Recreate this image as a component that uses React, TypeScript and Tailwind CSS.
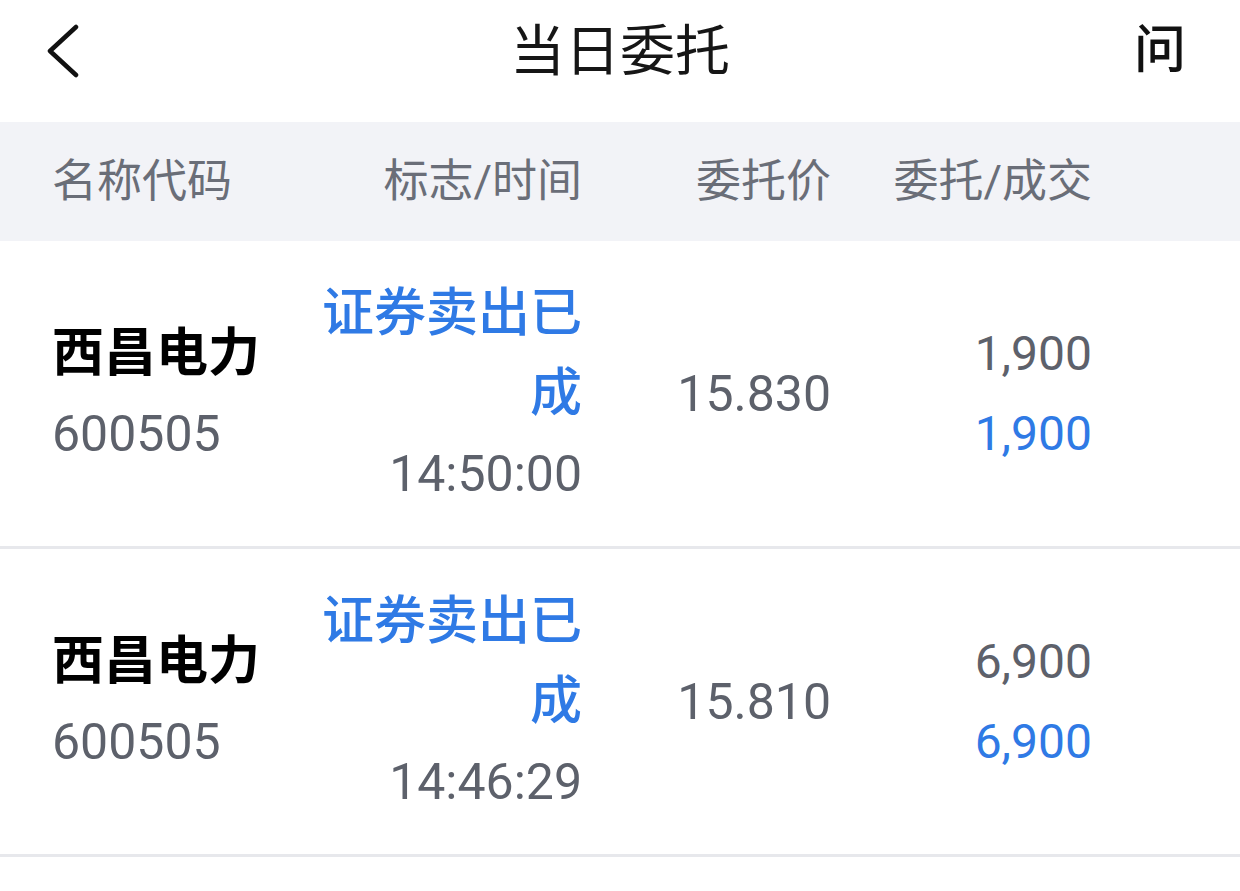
import React from 'react';

const orders = [
  { name: '西昌电力', code: '600505', status: '证券卖出已成', time: '14:50:00', price: '15.830', qty: '1,900', done: '1,900' },
  { name: '西昌电力', code: '600505', status: '证券卖出已成', time: '14:46:29', price: '15.810', qty: '6,900', done: '6,900' },
];

const font = { fontFamily: "Roboto, 'Noto Sans CJK SC', sans-serif" };

export default function App() {
  return (
    <div className="min-h-screen w-full bg-white" style={font}>
      {/* Top bar */}
      <div className="grid h-[122px] grid-cols-[1fr_auto_1fr] items-center px-[46px] pb-[20px]">
        <div className="flex items-center">
          <svg width="34" height="54" viewBox="0 0 34 54" fill="none">
            <path d="M30 3 L4 27 L30 51" stroke="#111" strokeWidth="4.5" strokeLinecap="round" strokeLinejoin="round" />
          </svg>
        </div>
        <div className="text-[55px] leading-none text-[#161616]">当日委托</div>
        <div className="flex justify-end pr-[8px]">
          <span className="text-[52px] font-medium leading-none text-[#111]">问</span>
        </div>
      </div>

      {/* Column labels */}
      <div className="grid h-[119px] grid-cols-[268px_262px_249px_261px] items-center bg-[#f2f3f7] pl-[52px] text-[45px] leading-none text-[#6a6e78]">
        <div>名称代码</div>
        <div className="text-right">标志/时间</div>
        <div className="text-right">委托价</div>
        <div className="text-right">委托/成交</div>
      </div>

      {/* Rows */}
      {orders.map((o, i) => (
        <div
          key={i}
          className="grid h-[308px] grid-cols-[268px_262px_249px_261px] items-center border-b-[3px] border-[#e7e8ec] pl-[52px]"
        >
          <div className="flex flex-col">
            <span className="text-[52px] font-bold leading-[80px] text-black">{o.name}</span>
            <span className="text-[50px] leading-[80px] text-[#5d616b]">{o.code}</span>
          </div>
          <div className="flex flex-col items-end text-right">
            <span className="text-[52px] font-medium leading-[80px] text-[#2f7ae5]">{o.status}</span>
            <span className="text-[50px] leading-[80px] text-[#5d616b]">{o.time}</span>
          </div>
          <div className="text-right text-[50px] leading-[80px] text-[#5d616b]">{o.price}</div>
          <div className="flex flex-col items-end">
            <span className="text-[48px] leading-[80px] text-[#5d616b]">{o.qty}</span>
            <span className="text-[48px] leading-[80px] text-[#2f7ae5]">{o.done}</span>
          </div>
        </div>
      ))}
    </div>
  );
}
